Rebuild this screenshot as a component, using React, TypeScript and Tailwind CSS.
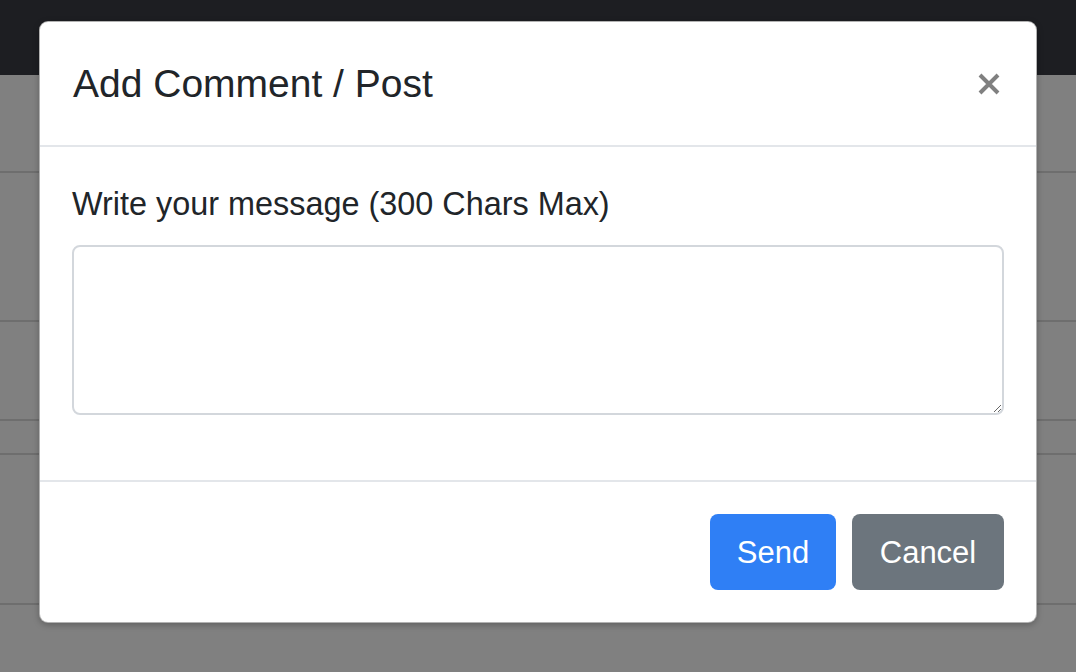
import React, { useState } from 'react'

const font = { fontFamily: '"Liberation Sans", Arial, sans-serif' }

export default function App() {
  const [message, setMessage] = useState('')

  return (
    <div className="relative h-[672px] w-[1076px] overflow-hidden bg-[#808080]" style={font}>
      {/* dimmed page behind the modal */}
      <div className="h-[75px] bg-[#1d1e22]" />
      <div className="h-[98px] border-b-2 border-[#6e6e6e]" />
      <div className="h-[149px] border-b-2 border-[#6e6e6e]" />
      <div className="h-[99px] border-b-2 border-[#6e6e6e]" />
      <div className="h-[34px] border-b-2 border-[#6e6e6e]" />
      <div className="h-[150px] border-b-2 border-[#6e6e6e]" />

      {/* Modal */}
      <div className="absolute left-[39px] top-[21px] flex h-[602px] w-[998px] flex-col rounded-[9px] border border-black/30 bg-white shadow-[0_2px_6px_rgba(0,0,0,0.25)]">
        <div className="flex h-[125px] items-center justify-between border-b-2 border-[#e3e6ea] pl-[33px] pr-[32px]">
          <h5 className="text-[39px] leading-[48px] text-[#212529]">Add Comment / Post</h5>
          <button className="flex h-[30px] w-[30px] items-center justify-center">
            <svg width="22" height="22" viewBox="0 0 22 22">
              <path d="M2 2 L20 20 M20 2 L2 20" stroke="#808080" strokeWidth="4" strokeLinecap="butt" />
            </svg>
          </button>
        </div>

        <div className="flex flex-col px-[32px] pb-[65px] pt-[33px]">
          <label className="text-[32.4px] leading-[48px] text-[#212529]">Write your message (300 Chars Max)</label>
          <textarea
            value={message}
            maxLength={300}
            onChange={e => setMessage(e.target.value)}
            className="mt-[17px] h-[170px] w-full rounded-[8px] border-2 border-[#d3d7dc] bg-white px-[22px] py-[12px] text-[32px] outline-none"
          />
        </div>

        <div className="flex flex-1 items-center justify-end gap-[16px] border-t-2 border-[#e3e6ea] pr-[32px]">
          <button className="flex h-[76px] w-[126px] items-center justify-center rounded-[8px] bg-[#2f7ff5] pt-[3px] text-[31px] text-white">
            Send
          </button>
          <button className="flex h-[76px] w-[152px] items-center justify-center rounded-[8px] bg-[#6c757d] pt-[3px] text-[31px] text-white">
            Cancel
          </button>
        </div>
      </div>
    </div>
  )
}
